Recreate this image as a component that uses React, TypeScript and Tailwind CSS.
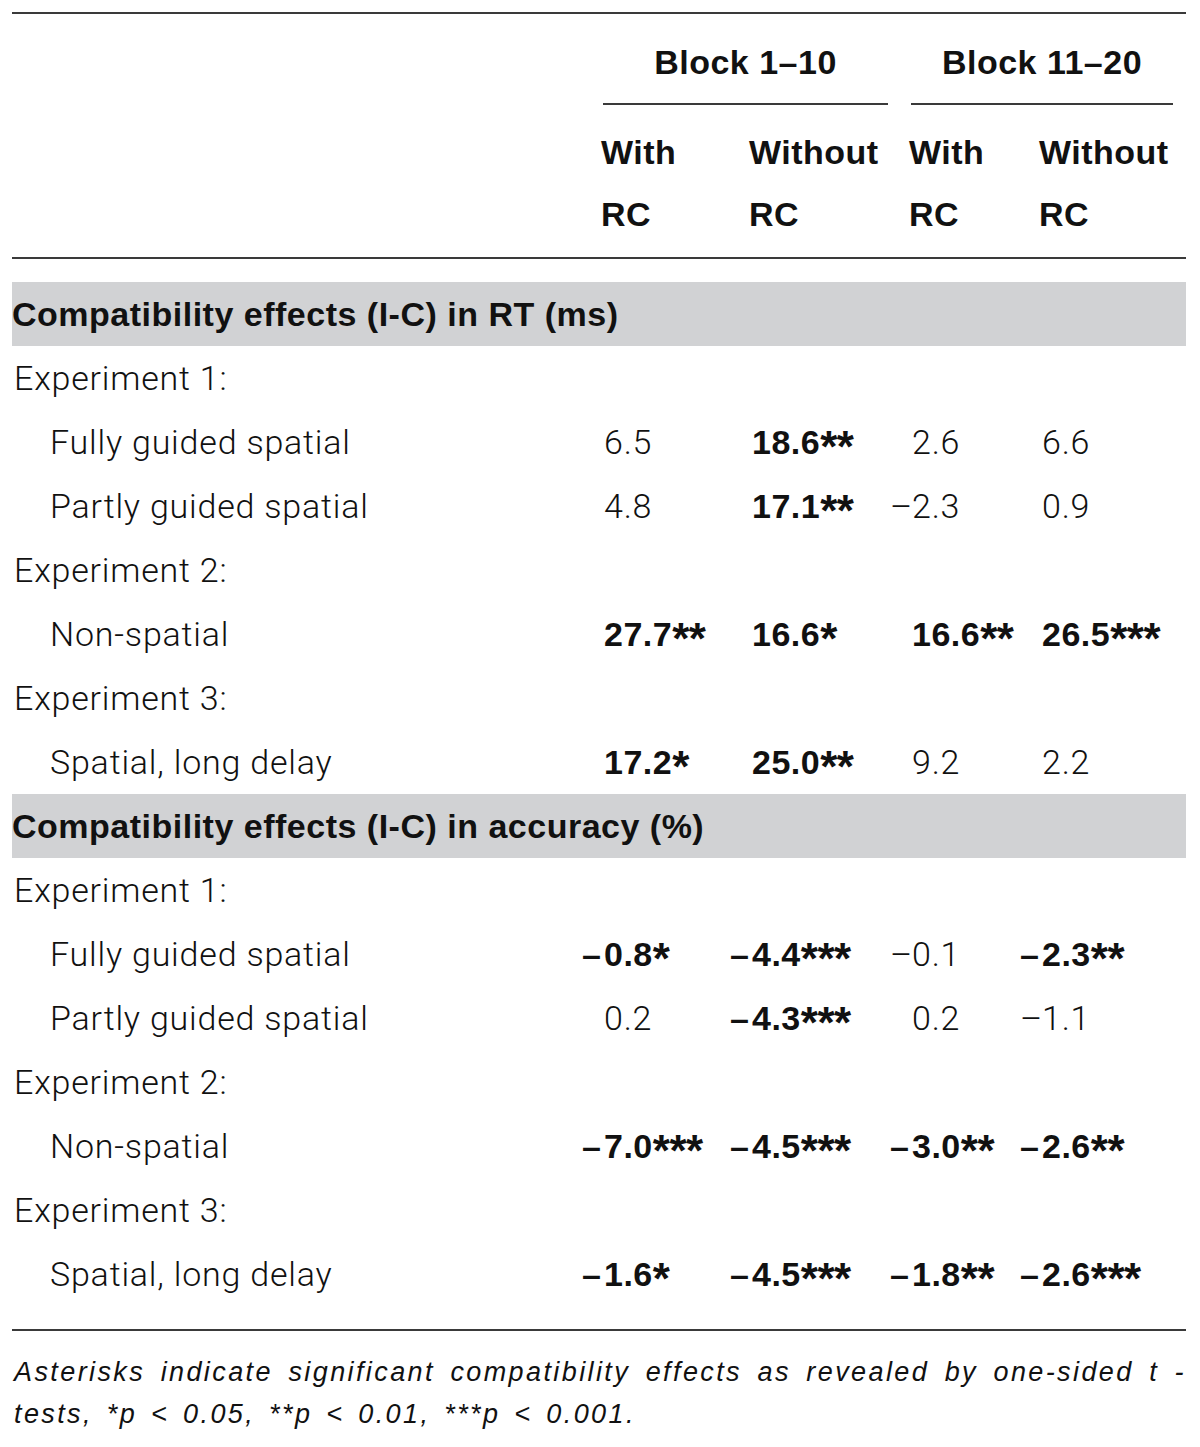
import React from "react";

type Cell = { v: string; b?: boolean };
type Row = { label: string; indent?: boolean; cells?: Cell[] };

const n = (v: string): Cell => ({ v });
const b = (v: string): Cell => ({ v, b: true });

const rt: Row[] = [
  { label: "Experiment 1:" },
  { label: "Fully guided spatial", indent: true, cells: [n("6.5"), b("18.6**"), n("2.6"), n("6.6")] },
  { label: "Partly guided spatial", indent: true, cells: [n("4.8"), b("17.1**"), n("–2.3"), n("0.9")] },
  { label: "Experiment 2:" },
  { label: "Non-spatial", indent: true, cells: [b("27.7**"), b("16.6*"), b("16.6**"), b("26.5***")] },
  { label: "Experiment 3:" },
  { label: "Spatial, long delay", indent: true, cells: [b("17.2*"), b("25.0**"), n("9.2"), n("2.2")] },
];

const acc: Row[] = [
  { label: "Experiment 1:" },
  { label: "Fully guided spatial", indent: true, cells: [b("–0.8*"), b("–4.4***"), n("–0.1"), b("–2.3**")] },
  { label: "Partly guided spatial", indent: true, cells: [n("0.2"), b("–4.3***"), n("0.2"), n("–1.1")] },
  { label: "Experiment 2:" },
  { label: "Non-spatial", indent: true, cells: [b("–7.0***"), b("–4.5***"), b("–3.0**"), b("–2.6**")] },
  { label: "Experiment 3:" },
  { label: "Spatial, long delay", indent: true, cells: [b("–1.6*"), b("–4.5***"), b("–1.8**"), b("–2.6***")] },
];

// columns: label | col1 (582) | col2 (730) | col3 (890) | col4 (1020)
const grid = "grid grid-cols-[570px_148px_160px_130px_1fr]";
const light = "font-['Roboto','Liberation_Sans',sans-serif] font-light tracking-[0.8px]";

function Value({ c }: { c: Cell }) {
  const neg = c.v.startsWith("–");
  const rest = neg ? c.v.slice(1) : c.v;
  const m = rest.match(/^([^*]*)(\**)$/);
  const num = m ? m[1] : rest;
  const stars = m ? m[2] : "";
  return (
    <div className={`flex whitespace-nowrap ${c.b ? "font-bold" : light}`}>
      <span className="w-[22px] shrink-0 tracking-[0px]">{neg ? "–" : ""}</span>
      <span>
        {num}
        {stars && (
          <span className="text-[44px] leading-none align-[-8px] tracking-[-0.5px]">{stars}</span>
        )}
      </span>
    </div>
  );
}

function Section({ title, rows }: { title: string; rows: Row[] }) {
  return (
    <div>
      <div className="bg-[#d1d2d4] h-[64px] leading-[64px] font-bold">{title}</div>
      {rows.map((r, i) => (
        <div key={i} className={`${grid} h-[64px] leading-[64px]`}>
          <div className={`${light} ${r.indent ? "pl-[38px]" : "pl-[2px]"}`}>{r.label}</div>
          {r.cells ? r.cells.map((c, j) => <Value key={j} c={c} />) : null}
        </div>
      ))}
    </div>
  );
}

export default function App() {
  return (
    <div
      className="w-[1200px] min-h-[1447px] bg-white text-[#111111] pt-[12px] pl-[12px] pr-[14px] text-[34px] tracking-[0.5px]"
      style={{ fontFamily: '"Liberation Sans", Arial, sans-serif' }}
    >
      <div className="h-[2px] bg-[#3a3a3a]" />
      <div className={`${grid} pt-[16px]`}>
        <div />
        <div className="col-span-2 ml-[21px] mr-[2px]">
          <div className="h-[64px] leading-[64px] text-center font-bold">Block 1–10</div>
          <div className="mt-[9px] h-[2px] bg-[#3a3a3a]" />
        </div>
        <div className="col-span-2 ml-[21px] mr-[13px]">
          <div className="h-[64px] leading-[64px] text-center font-bold">Block 11–20</div>
          <div className="mt-[9px] h-[2px] bg-[#3a3a3a]" />
        </div>
      </div>
      <div className={`${grid} pt-[16px] font-bold leading-[62px]`}>
        <div />
        <div className="pl-[19px]">With<br />RC</div>
        <div className="pl-[19px]">Without<br />RC</div>
        <div className="pl-[19px]">With<br />RC</div>
        <div className="pl-[19px]">Without<br />RC</div>
      </div>
      <div className="mt-[12px] h-[2px] bg-[#3a3a3a]" />
      <div className="mt-[23px]">
        <Section title="Compatibility effects (I-C) in RT (ms)" rows={rt} />
        <Section title="Compatibility effects (I-C) in accuracy (%)" rows={acc} />
      </div>
      <div className="mt-[23px] h-[2px] bg-[#3a3a3a]" />
      <div className="mt-[20px] italic text-[27px] leading-[42px] tracking-[2.4px] pl-[2px]">
        <div className="whitespace-nowrap text-justify [text-align-last:justify]">
          Asterisks indicate significant compatibility effects as revealed by one-sided t -
        </div>
        <div className="whitespace-nowrap [word-spacing:4px]">tests, *p &lt; 0.05, **p &lt; 0.01, ***p &lt; 0.001.</div>
      </div>
    </div>
  );
}
